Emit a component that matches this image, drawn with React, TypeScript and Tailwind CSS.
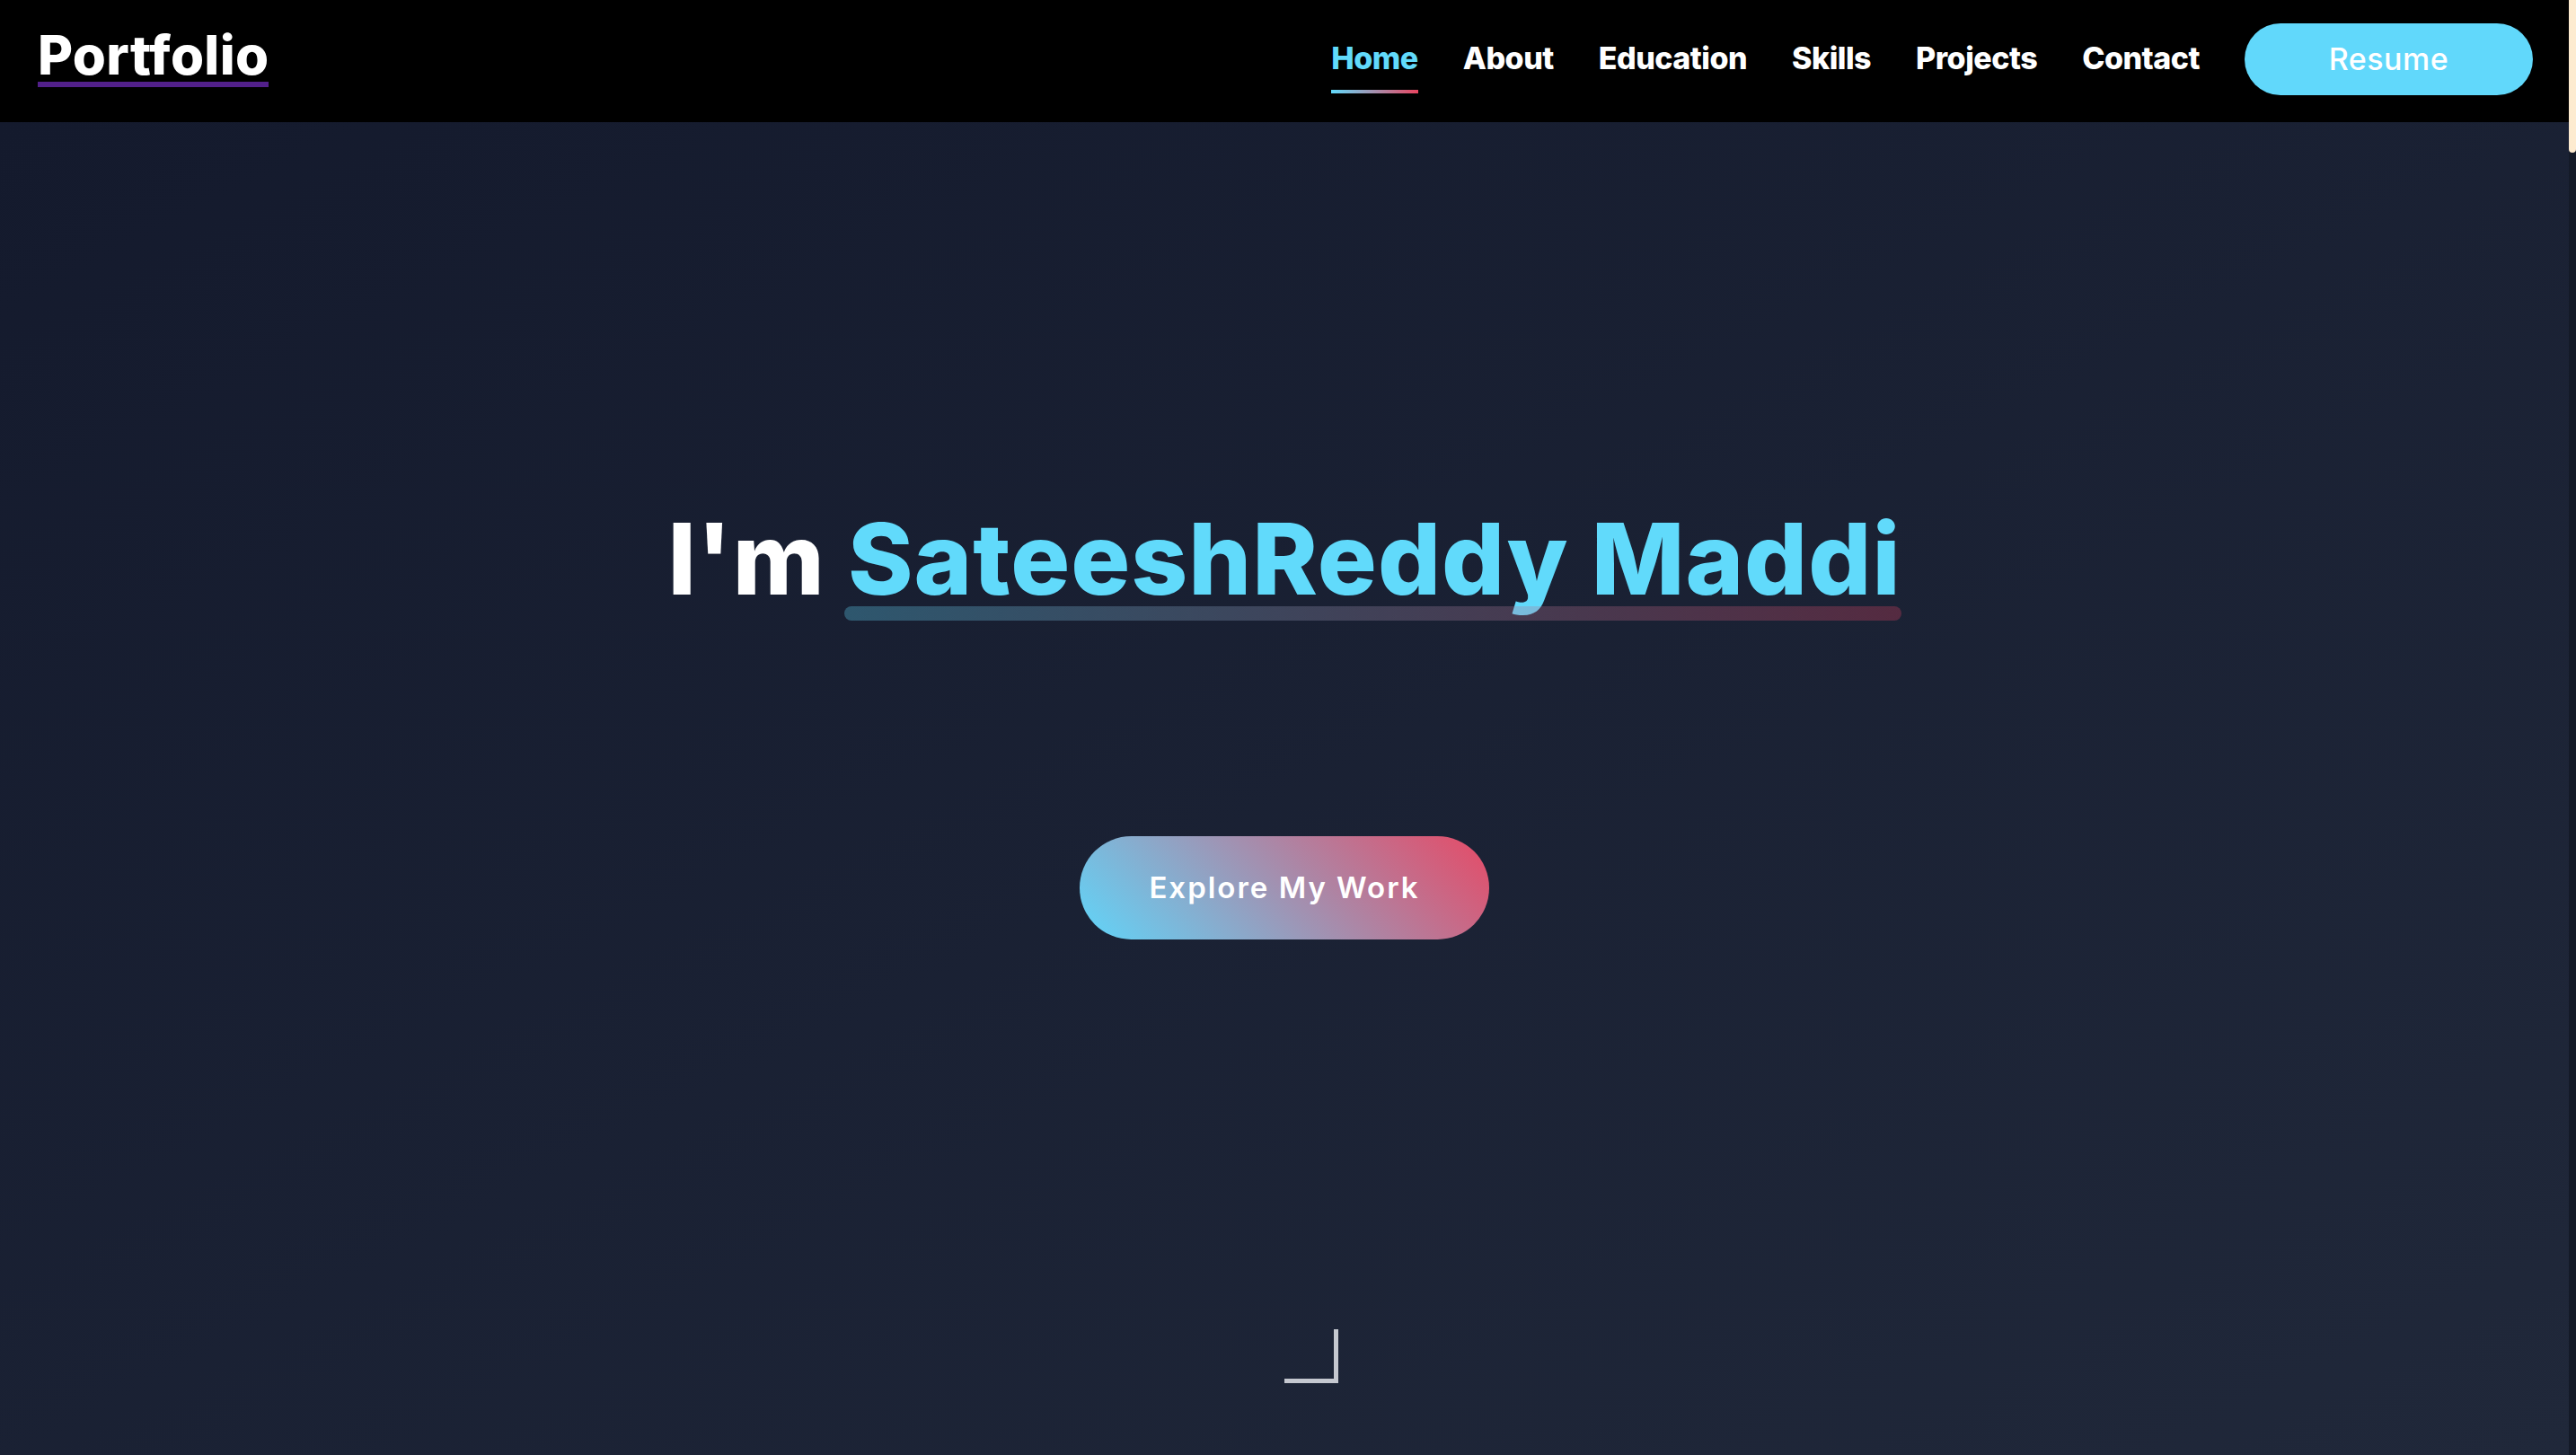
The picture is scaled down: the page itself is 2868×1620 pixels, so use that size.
import React from 'react';

const links = ['Home', 'About', 'Education', 'Skills', 'Projects', 'Contact'];

const Navbar = () => {
  return (
    <nav className="h-[136px] bg-black flex items-start justify-between pl-[42px] pr-[40px] shrink-0">
      <div className="flex flex-col pt-[31px]">
        <span className="text-white text-[60px] font-extrabold leading-none tracking-[0.3px]">Portfolio</span>
        <div className="h-[6px] bg-[#52208a] mt-[0px]" />
      </div>
      <div className="flex items-start gap-[50px]">
        {links.map((l) => (
          <a key={l} href="#" className="flex flex-col pt-[48px]">
            <span
              className={
                l === 'Home'
                  ? 'text-[#61dafb] text-[34px] font-extrabold leading-none tracking-[-0.5px]'
                  : 'text-white text-[34px] font-extrabold leading-none tracking-[-0.5px]'
              }
            >
              {l}
            </span>
            <div
              className={
                l === 'Home'
                  ? 'h-[4px] mt-[18px] bg-linear-to-r/srgb from-[#61dafb] to-[#e94560]'
                  : 'h-[4px] mt-[18px]'
              }
            />
          </a>
        ))}
        <button className="mt-[26px] w-[321px] h-[80px] rounded-full bg-[#61d8fb] text-white text-[34px] font-medium tracking-[0.5px] leading-none">
          Resume
        </button>
      </div>
    </nav>
  );
};

const Hero = () => {
  return (
    <section className="flex-1 flex flex-col items-center bg-linear-to-br from-[#141a2d] to-[#20283a]">
      <h1 className="mt-[431px] text-[110px] font-extrabold leading-none tracking-[1px] text-white whitespace-nowrap">
        I'm{' '}
        <span className="relative inline-block text-[#61dafb]">
          SateeshReddy Maddi
          <span className="absolute left-[-4px] right-0 bottom-[-14px] h-[16px] rounded-full bg-linear-to-r/srgb from-[#61dafb] to-[#dc405e] opacity-30" />
        </span>
      </h1>
      <button className="mt-[254px] w-[456px] h-[115px] rounded-full bg-linear-45/srgb from-[#5fd6fa] to-[#e64a66] text-white text-[33px] font-semibold tracking-[2px]">
        Explore My Work
      </button>
      <div className="mt-[434px] w-[120px] flex justify-end">
        <div className="w-[60px] h-[60px] border-r-[5px] border-b-[5px] border-[#c5c8d0]" />
      </div>
    </section>
  );
};

export default function App() {
  return (
    <div className="h-[1620px] overflow-hidden flex font-['Inter',sans-serif]">
      <div className="flex-1 flex flex-col">
        <Navbar />
        <Hero />
      </div>
      <aside className="w-[8px] bg-[#141a28] flex flex-col">
        <div className="h-[170px] bg-[#fdebd0] rounded-b-[8px]" />
      </aside>
    </div>
  );
}
